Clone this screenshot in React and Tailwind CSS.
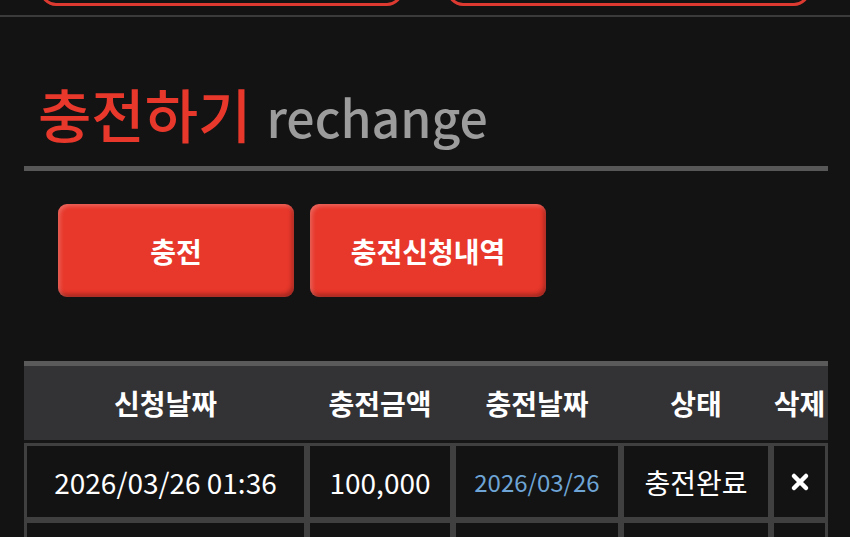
const rows = [
  { requested: "2026/03/26 01:36", amount: "100,000", charged: "2026/03/26", status: "충전완료" },
  { requested: "", amount: "", charged: "", status: "" },
];

function XIcon() {
  return (
    <svg width="20" height="20" viewBox="0 0 20 20" className="mx-auto">
      <path d="M4 4 L16 16 M16 4 L4 16" stroke="#ffffff" strokeWidth="4.5" strokeLinecap="round" />
    </svg>
  );
}

export default function App() {
  return (
    <div className="min-h-screen bg-[#131314] font-['Noto_Sans_CJK_KR','Noto_Sans',sans-serif] overflow-hidden">
      {/* top nav buttons (scrolled past) */}
      <div className="flex h-[6px] items-end gap-[44px] overflow-hidden pl-[40px]">
        <div className="h-10 w-[363px] shrink-0 rounded-b-[16px] border-[3px] border-[#dc3a30]" />
        <div className="h-10 w-[363px] shrink-0 rounded-b-[16px] border-[3px] border-[#dc3a30]" />
      </div>
      <div className="mt-[9px] h-[2px] bg-[#3b3b3b]" />

      <div className="mx-[24px] w-[804px]">
        {/* title */}
        <div className="mt-[61px] flex items-baseline pl-[14px] leading-[70px]">
          <h1 className="text-[58px] font-medium text-[#e8382c]">충전하기</h1>
          <span className="ml-[15px] text-[50px] font-medium text-[#9c9c9c]">rechange</span>
        </div>
        <div className="mt-[15px] h-[5px] bg-[#575757]" />

        {/* action buttons */}
        <div className="mt-[33px] flex gap-4 pl-[34px]">
          <button className="h-[93px] w-[236px] rounded-[9px] bg-[#e8372b] text-[28px] font-bold text-white shadow-[inset_2px_2px_4px_rgba(255,255,255,0.25),inset_-2px_-3px_4px_rgba(0,0,0,0.3)]">
            충전
          </button>
          <button className="h-[93px] w-[236px] rounded-[9px] bg-[#e8372b] text-[28px] font-bold text-white shadow-[inset_2px_2px_4px_rgba(255,255,255,0.25),inset_-2px_-3px_4px_rgba(0,0,0,0.3)]">
            충전신청내역
          </button>
        </div>

        {/* history table */}
        <table className="mt-[64px] w-full table-fixed border-separate border-spacing-0 text-white">
          <colgroup>
            <col className="w-[283px]" />
            <col className="w-[146px]" />
            <col className="w-[168px]" />
            <col className="w-[150px]" />
            <col className="w-[57px]" />
          </colgroup>
          <thead>
            <tr className="bg-[#333235]">
              {["신청날짜", "충전금액", "충전날짜", "상태", "삭제"].map((h) => (
                <th
                  key={h}
                  className="h-[82px] whitespace-nowrap border-t-[5px] border-b-[3px] border-t-[#5a5a5a] border-b-[#161617] px-0 text-[28px] font-bold"
                >
                  {h}
                </th>
              ))}
            </tr>
          </thead>
          <tbody>
            {rows.map((r, i) => (
              <tr key={i} className="h-[77px]">
                <td className="border-[3px] border-[#404040] text-center text-[28px]">{r.requested}</td>
                <td className="border-[3px] border-[#404040] text-center text-[28px]">{r.amount}</td>
                <td className="border-[3px] border-[#404040] text-center text-[24px] text-[#6ea5d6]">{r.charged}</td>
                <td className="border-[3px] border-[#404040] text-center text-[28px]">{r.status}</td>
                <td className="border-[3px] border-[#404040] text-center">{r.status && <XIcon />}</td>
              </tr>
            ))}
          </tbody>
        </table>
      </div>
    </div>
  );
}
